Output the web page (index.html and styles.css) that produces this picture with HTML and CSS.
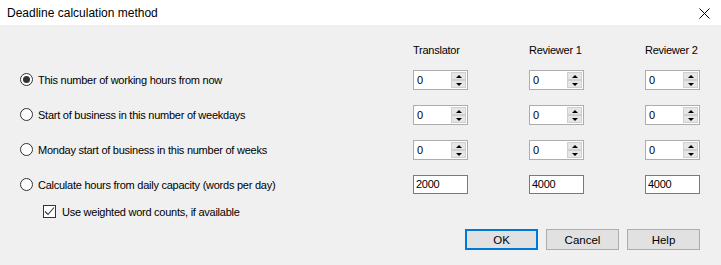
FILE: index.html
```html
<!DOCTYPE html>
<html>
<head>
<meta charset="utf-8">
<link rel="stylesheet" href="styles.css">
</head>
<body>
<div class="window">
  <div class="titlebar">
    <span class="title">Deadline calculation method</span>
    <svg class="close" width="11" height="11" viewBox="0 0 11 11"><path d="M0.5 0.5 L10.5 10.5 M10.5 0.5 L0.5 10.5" stroke="#000" stroke-width="1" fill="none"/></svg>
  </div>
  <div class="content">
    <div class="grid">
      <div></div>
      <div class="head">Translator</div>
      <div class="head">Reviewer 1</div>
      <div class="head">Reviewer 2</div>

      <label class="opt"><span class="radio checked"></span>This number of working hours from now</label>
      <div class="spin"><span class="val">0</span><span class="btns"><span class="up"></span><span class="down"></span></span></div>
      <div class="spin"><span class="val">0</span><span class="btns"><span class="up"></span><span class="down"></span></span></div>
      <div class="spin"><span class="val">0</span><span class="btns"><span class="up"></span><span class="down"></span></span></div>

      <label class="opt"><span class="radio"></span>Start of business in this number of weekdays</label>
      <div class="spin"><span class="val">0</span><span class="btns"><span class="up"></span><span class="down"></span></span></div>
      <div class="spin"><span class="val">0</span><span class="btns"><span class="up"></span><span class="down"></span></span></div>
      <div class="spin"><span class="val">0</span><span class="btns"><span class="up"></span><span class="down"></span></span></div>

      <label class="opt"><span class="radio"></span>Monday start of business in this number of weeks</label>
      <div class="spin"><span class="val">0</span><span class="btns"><span class="up"></span><span class="down"></span></span></div>
      <div class="spin"><span class="val">0</span><span class="btns"><span class="up"></span><span class="down"></span></span></div>
      <div class="spin"><span class="val">0</span><span class="btns"><span class="up"></span><span class="down"></span></span></div>

      <label class="opt"><span class="radio"></span>Calculate hours from daily capacity (words per day)</label>
      <div class="textbox">2000</div>
      <div class="textbox">4000</div>
      <div class="textbox">4000</div>
    </div>
    <label class="check"><span class="box"><svg width="11" height="11" viewBox="0 0 11 11"><path d="M1 5.5 L4 8.5 L10 1.5" stroke="#333" stroke-width="1.1" fill="none"/></svg></span>Use weighted word counts, if available</label>
    <div class="buttons">
      <div class="btn default">OK</div>
      <div class="btn">Cancel</div>
      <div class="btn">Help</div>
    </div>
  </div>
</div>
</body>
</html>
```
FILE: styles.css
```css
html, body {
  margin: 0;
  padding: 0;
}
body {
  width: 721px;
  height: 265px;
  overflow: hidden;
  background: #f0f0f0;
  font-family: "Liberation Sans", Arial, sans-serif;
  font-size: 11px;
  letter-spacing: -0.25px;
  color: #000;
}
.window {
  width: 721px;
  height: 265px;
  display: flex;
  flex-direction: column;
}
.titlebar {
  height: 25px;
  background: #fff;
  display: flex;
  align-items: center;
  justify-content: space-between;
  padding: 0 11px 0 7px;
  letter-spacing: 0;
}
.title {
  font-size: 12px;
  padding-top: 1px;
}
.close {
  display: block;
  margin-top: 2px;
}
.content {
  padding: 0 21px 0 20px;
}
.grid {
  display: grid;
  grid-template-columns: 393px 116px 116px 55px;
  grid-template-rows: 20px 20px 20px 20px 20px;
  row-gap: 15px;
  padding-top: 10px;
}
.head {
  align-self: end;
  line-height: 13px;
  white-space: nowrap;
  margin-bottom: -2px;
}
.opt {
  display: flex;
  align-items: center;
  gap: 5px;
  white-space: nowrap;
}
.radio {
  width: 11px;
  height: 11px;
  border: 1px solid #333;
  border-radius: 50%;
  background: #fff;
  display: flex;
  align-items: center;
  justify-content: center;
  flex: none;
  margin-top: -1px;
}
.radio.checked::after {
  content: "";
  width: 7px;
  height: 7px;
  border-radius: 50%;
  background: #333;
}
.spin {
  width: 55px;
  height: 20px;
  box-sizing: border-box;
  border: 1px solid #adadad;
  background: #fff;
  display: flex;
  align-items: center;
  justify-content: space-between;
  padding: 1px 1px 1px 3px;
}
.val {
  line-height: 16px;
}
.btns {
  width: 15px;
  height: 16px;
  display: flex;
  flex-direction: column;
  gap: 0;
}
.up, .down {
  flex: 1;
  background: #e6e6e6;
  border: 1px solid #d0d0d0;
  display: flex;
  align-items: center;
  justify-content: center;
}
.up::after {
  content: "";
  border-left: 3px solid transparent;
  border-right: 3px solid transparent;
  border-bottom: 3px solid #000;
}
.down::after {
  content: "";
  border-left: 3px solid transparent;
  border-right: 3px solid transparent;
  border-top: 3px solid #000;
}
.textbox {
  width: 55px;
  height: 19px;
  box-sizing: border-box;
  border: 1px solid #7a7a7a;
  background: #fff;
  padding-left: 2px;
  line-height: 17px;
}
.check {
  display: flex;
  align-items: center;
  gap: 6px;
  margin-top: 10px;
  margin-left: 23px;
  height: 13px;
}
.box {
  width: 11px;
  height: 11px;
  border: 1px solid #333;
  background: #fff;
  display: flex;
  align-items: center;
  justify-content: center;
  flex: none;
}
.box svg {
  display: block;
}
.buttons {
  display: flex;
  justify-content: flex-end;
  gap: 8px;
  margin-top: 11px;
}
.btn {
  width: 73px;
  height: 21px;
  box-sizing: border-box;
  border: 1px solid #adadad;
  background: #e1e1e1;
  display: flex;
  align-items: center;
  justify-content: center;
  font-size: 11.5px;
  letter-spacing: 0;
}
.btn.default {
  border: 2px solid #0078d7;
}
```
